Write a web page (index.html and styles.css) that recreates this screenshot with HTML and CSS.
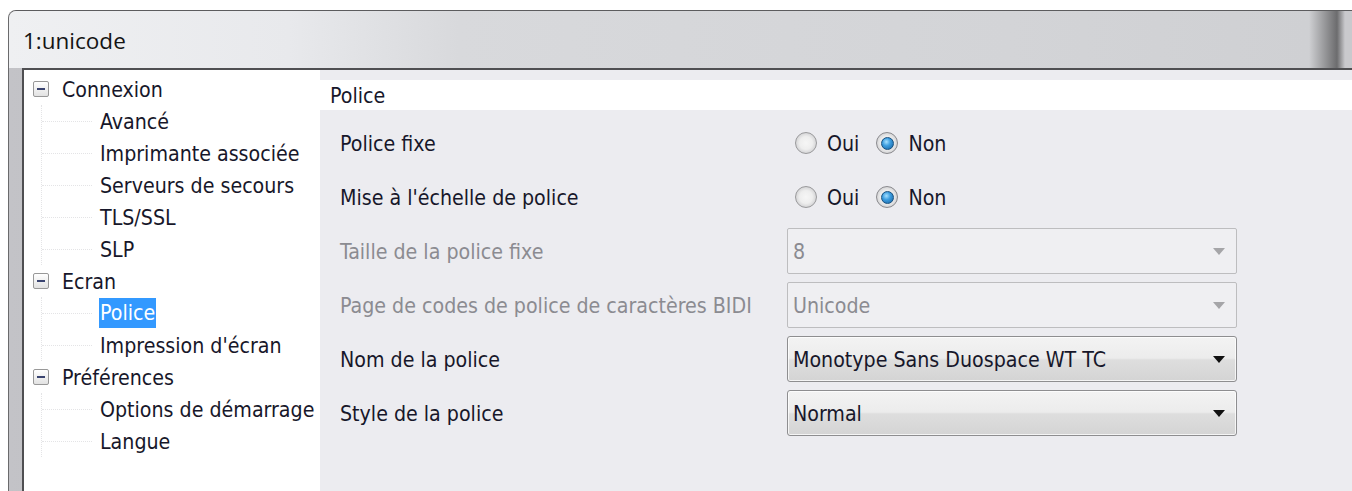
FILE: index.html
```html
<!DOCTYPE html>
<html lang="fr">
<head>
<meta charset="utf-8">
<title>1:unicode</title>
<link rel="stylesheet" href="styles.css">
</head>
<body>
<div class="window">
  <header class="titlebar"><span class="title">1:unicode</span></header>
  <div class="client">
    <nav class="tree">
      <div class="row parent"><span class="toggle"></span><span class="label">Connexion</span></div>
      <div class="branch">
        <div class="row leaf"><span class="label">Avancé</span></div>
        <div class="row leaf"><span class="label">Imprimante associée</span></div>
        <div class="row leaf"><span class="label">Serveurs de secours</span></div>
        <div class="row leaf"><span class="label">TLS/SSL</span></div>
        <div class="row leaf"><span class="label">SLP</span></div>
      </div>
      <div class="row parent"><span class="toggle"></span><span class="label">Ecran</span></div>
      <div class="branch">
        <div class="row leaf selected"><span class="label">Police</span></div>
        <div class="row leaf"><span class="label">Impression d'écran</span></div>
      </div>
      <div class="row parent"><span class="toggle"></span><span class="label">Préférences</span></div>
      <div class="branch">
        <div class="row leaf"><span class="label">Options de démarrage</span></div>
        <div class="row leaf"><span class="label">Langue</span></div>
      </div>
    </nav>
    <section class="panel">
      <div class="panel-head">Police</div>
      <div class="form">
        <span class="field-label">Police fixe</span>
        <div class="radios">
          <span class="opt"><span class="radio"></span>Oui</span>
          <span class="opt"><span class="radio checked"></span>Non</span>
        </div>

        <span class="field-label">Mise à l'échelle de police</span>
        <div class="radios">
          <span class="opt"><span class="radio"></span>Oui</span>
          <span class="opt"><span class="radio checked"></span>Non</span>
        </div>

        <span class="field-label disabled">Taille de la police fixe</span>
        <div class="select"><span class="value">8</span><span class="arrow"></span></div>

        <span class="field-label disabled">Page de codes de police de caractères BIDI</span>
        <div class="select"><span class="value">Unicode</span><span class="arrow"></span></div>

        <span class="field-label">Nom de la police</span>
        <div class="select active"><span class="value">Monotype Sans Duospace WT TC</span><span class="arrow"></span></div>

        <span class="field-label">Style de la police</span>
        <div class="select active"><span class="value">Normal</span><span class="arrow"></span></div>
      </div>
    </section>
  </div>
</div>
</body>
</html>
```

FILE: styles.css
```css
* { box-sizing: border-box; }

html, body {
  margin: 0;
  height: 100%;
}

body {
  background: #ffffff;
  font-family: "DejaVu Sans Condensed", "DejaVu Sans", sans-serif;
  font-size: 21.2px;
  color: #17172a;
  overflow: hidden;
}

/* window frame */
.window {
  margin: 10px 0 0 8px;
  height: calc(100% - 10px);
  display: flex;
  flex-direction: column;
  border-top: 1px solid #5c5c5e;
  border-left: 1px solid #6a6a6c;
  border-top-left-radius: 8px;
  background: linear-gradient(to right, #c3c3c7 0, #b3b3b7 40%, #c6c6ca 75%, #dcdcdf 100%);
}

.titlebar {
  flex: none;
  height: 57px;
  display: flex;
  align-items: center;
  padding: 2px 0 0 14px;
  border-top-left-radius: 7px;
  background: linear-gradient(to right,
    #eff0f2 0, #e8e9ec 280px, #d8d9dc 450px, #d3d4d7 1000px,
    #cfd0d3 1300px, #6c6c6e 1328px, #c9c9cd 1336px);
  font-family: "Open Sans", "DejaVu Sans", sans-serif;
  font-size: 22.5px;
  color: #141414;
}

.client {
  flex: 1;
  min-height: 0;
  display: flex;
  margin-left: 13px;
  border-top: 2px solid #4f4f52;
  border-left: 2px solid #4f4f52;
}

/* navigation tree */
.tree {
  flex: none;
  width: 296px;
  background: #ffffff;
  padding-top: 3px;
}

.row {
  height: 32px;
  display: flex;
  align-items: center;
  white-space: nowrap;
}

.parent {
  padding-left: 9px;
  gap: 13px;
}

.toggle {
  width: 16px;
  height: 16px;
  flex: none;
  display: flex;
  align-items: center;
  justify-content: center;
  border: 1px solid #989898;
  border-radius: 2px;
  background: linear-gradient(#ffffff, #e2e2e2);
}

.toggle::after {
  content: "";
  width: 8px;
  height: 2px;
  background: #3a4470;
}

.branch {
  margin-left: 17px;
  border-left: 1px dotted #e4e4e6;
}

.leaf::before {
  content: "";
  flex: none;
  width: 50px;
  margin-right: 8px;
  border-top: 1px dotted #e4e4e6;
}

.leaf.selected .label {
  background: #3399ff;
  color: #ffffff;
  line-height: 30px;
  padding: 0 1px;
  margin-left: -1px;
}

/* settings panel */
.panel {
  flex: 1;
  min-width: 0;
  background: #ececf0;
  padding-top: 10px;
}

.panel-head {
  height: 30px;
  display: flex;
  align-items: center;
  padding-left: 10px;
  background: #ffffff;
}

.form {
  margin-top: 6px;
  padding-left: 20px;
  display: grid;
  grid-template-columns: 447px 450px;
  grid-auto-rows: 54px;
  align-items: center;
}

.field-label { white-space: nowrap; }
.field-label.disabled { color: #8b8b91; }

.radios {
  display: flex;
  align-items: center;
  gap: 17px;
  padding-left: 8px;
}

.opt {
  display: flex;
  align-items: center;
  gap: 10px;
}

.radio {
  width: 22px;
  height: 22px;
  flex: none;
  display: flex;
  align-items: center;
  justify-content: center;
  border-radius: 50%;
  border: 1px solid #9a9a9c;
  background: radial-gradient(circle at 50% 50%, #f6f6f6 0, #eeeeee 45%, #d2d2d4 75%, #e6e6e8 100%);
}

.radio.checked {
  border-color: #8a8a8e;
}

.radio.checked::after {
  content: "";
  width: 11px;
  height: 11px;
  border-radius: 50%;
  border: 1px solid #17507f;
  background: radial-gradient(circle at 40% 35%, #a6e0ff 0, #3d9ee0 40%, #15609f 100%);
}

.select {
  height: 46px;
  display: flex;
  align-items: center;
  justify-content: space-between;
  padding: 0 11px 0 5px;
  border: 1px solid #bdbdbf;
  border-radius: 2px;
  background: #efeff2;
  color: #8b8b91;
}

.arrow {
  width: 0;
  height: 0;
  border-left: 6.5px solid transparent;
  border-right: 6.5px solid transparent;
  border-top: 7px solid #a5a5a8;
}

.select.active {
  border-color: #8e8e90;
  border-radius: 3px;
  color: #17172a;
  background: linear-gradient(#f3f3f3, #ececec 48%, #dedede 52%, #d4d4d4);
  box-shadow: inset 0 0 0 1px rgba(255, 255, 255, 0.75);
}

.select.active .arrow { border-top-color: #111111; }
```
